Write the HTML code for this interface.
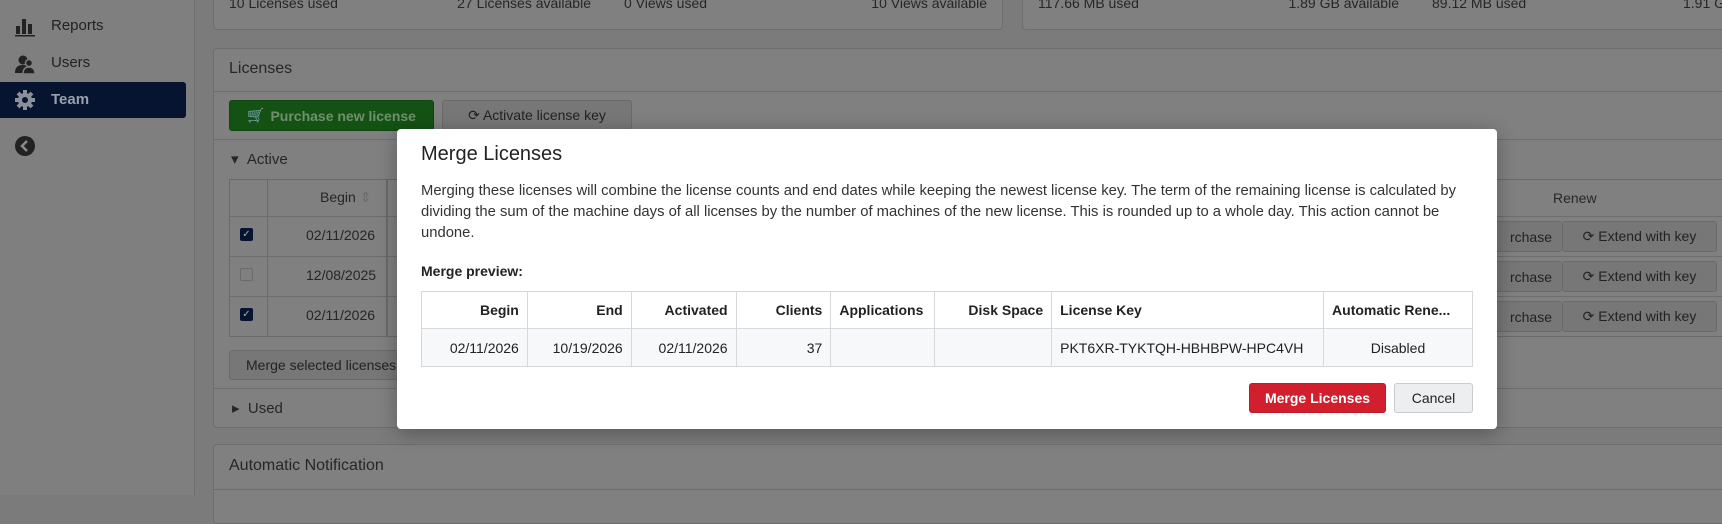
<!DOCTYPE html>
<html style="background:#7b7b7b"><head><meta charset="utf-8"><style>
*{box-sizing:border-box;margin:0;padding:0}
body{width:1722px;height:495px;overflow:hidden;background:#7b7b7b;font-family:"Liberation Sans",sans-serif;color:#262626;position:relative;font-size:14px;white-space:nowrap}
.a{position:absolute}
.side{left:0;top:0;width:195px;height:495px;background:#7f7f7f;border-right:1px solid #6f6f6f}
.nav{position:absolute;left:51px;font-size:15px;color:#222}
.card{background:#808080;border:1px solid #6e6e6e;border-radius:4px}
.line{height:1px;background:#6e6e6e}
.btn{position:absolute;border:1px solid #6a6a6a;border-radius:3px;background:#777;font-size:14px;display:flex;align-items:center;justify-content:center;gap:6px;color:#222}
.modal{left:397px;top:129px;width:1100px;height:300px;background:#fff;border-radius:4px;box-shadow:0 4px 20px rgba(0,0,0,.3)}
table{border-collapse:collapse;position:absolute;left:24px;top:162px;width:1052px;font-size:14px}
td,th{border:1px solid #d5d9dc;height:37px;padding:0 8px;text-align:right;font-weight:normal;color:#222}
th{font-weight:600}
tr.b td{background:#f7f8f9;height:38px}
</style></head><body>
<div class="a side"></div>
<svg class="a" style="left:15px;top:17px" width="21" height="20"><rect x="1" y="9" width="4" height="8" fill="#222"/><rect x="7" y="2" width="4" height="15" fill="#222"/><rect x="13" y="7" width="4" height="10" fill="#222"/><rect x="0" y="18" width="20" height="1.5" fill="#222"/></svg>
<div class="nav" style="top:17px">Reports</div>
<svg class="a" style="left:15px;top:55px" width="21" height="19"><circle cx="8" cy="5" r="4.5" fill="#222"/><path d="M0 18c0-6 3-8 8-8s8 2 8 8z" fill="#222"/><circle cx="14" cy="8" r="3.5" fill="#222" stroke="#7f7f7f" stroke-width="1.5"/><path d="M8 19c0-5 2.5-7 6-7s6 2 6 7z" fill="#222" stroke="#7f7f7f" stroke-width="1.5"/></svg>
<div class="nav" style="top:54px">Users</div>
<div class="a" style="left:0;top:82px;width:186px;height:36px;background:#061430;border-radius:0 3px 3px 0"></div>
<svg class="a" style="left:15px;top:90px" width="20" height="20"><g fill="#8a8f98"><circle cx="10" cy="10" r="7"/><g stroke="#8a8f98" stroke-width="4"><line x1="10" y1="0" x2="10" y2="20"/><line x1="0" y1="10" x2="20" y2="10"/><line x1="3" y1="3" x2="17" y2="17"/><line x1="17" y1="3" x2="3" y2="17"/></g></g><circle cx="10" cy="10" r="3" fill="#061430"/></svg>
<div class="nav" style="top:91px;color:#9aa0aa;font-weight:bold">Team</div>
<svg class="a" style="left:15px;top:136px" width="20" height="20"><circle cx="10" cy="10" r="10" fill="#222"/><path d="M12 5l-5 5 5 5" stroke="#8a8a8a" stroke-width="2.5" fill="none"/></svg>

<div class="a card" style="left:213px;top:-10px;width:790px;height:40px"></div>
<div class="a card" style="left:1022px;top:-10px;width:720px;height:40px"></div>
<div class="a" style="left:229px;top:-5px;font-size:14px">10 Licenses used</div>
<div class="a" style="left:440px;width:151px;text-align:right;top:-5px">27 Licenses available</div>
<div class="a" style="left:624px;top:-5px">0 Views used</div>
<div class="a" style="left:840px;width:147px;text-align:right;top:-5px">10 Views available</div>
<div class="a" style="left:1038px;top:-5px">117.66 MB used</div>
<div class="a" style="left:1250px;width:149px;text-align:right;top:-5px">1.89 GB available</div>
<div class="a" style="left:1432px;top:-5px">89.12 MB used</div>
<div class="a" style="left:1683px;top:-5px">1.91 GB</div>

<div class="a card" style="left:213px;top:48px;width:1530px;height:380px"></div>
<div class="a" style="left:229px;top:60px;font-size:16px">Licenses</div>
<div class="a line" style="left:214px;top:91px;width:1508px"></div>
<div class="btn" style="left:229px;top:100px;width:205px;height:31px;background:#145214;border-color:#104510;color:#6f8f6f;font-weight:bold"><span>🛒</span>Purchase new license</div>
<div class="btn" style="left:442px;top:100px;width:190px;height:31px">⟳ Activate license key</div>
<div class="a line" style="left:214px;top:139px;width:1508px"></div>
<div class="a" style="left:231px;top:150px;font-size:15px">▾&nbsp;&nbsp;Active</div>
<div class="a" style="left:229px;top:179px;width:1500px;height:158px;border:1px solid #6a6a6a"></div>
<div class="a line" style="left:229px;top:216px;width:1500px"></div>
<div class="a line" style="left:229px;top:256px;width:1500px"></div>
<div class="a line" style="left:229px;top:296px;width:1500px"></div>
<div class="a" style="left:267px;top:179px;width:1px;height:158px;background:#6a6a6a"></div>
<div class="a" style="left:386px;top:179px;width:2px;height:158px;background:#6a6a6a"></div>
<div class="a" style="left:320px;top:189px">Begin <span style="color:#6a6a6a">⇕</span></div>
<div class="a" style="left:240px;top:228px;width:13px;height:13px;background:#061430;border-radius:2px;color:#aaa;font-size:10px;text-align:center;line-height:13px">✓</div>
<div class="a" style="left:240px;top:268px;width:13px;height:13px;border:1px solid #6a6a6a;border-radius:2px"></div>
<div class="a" style="left:240px;top:308px;width:13px;height:13px;background:#061430;border-radius:2px;color:#aaa;font-size:10px;text-align:center;line-height:13px">✓</div>
<div class="a" style="left:306px;top:227px">02/11/2026</div>
<div class="a" style="left:306px;top:267px">12/08/2025</div>
<div class="a" style="left:306px;top:307px">02/11/2026</div>
<div class="a" style="left:1553px;top:190px">Renew</div>
<div class="btn" style="left:1480px;top:221px;width:82px;height:31px;justify-content:flex-end;padding-right:10px;border-right:none">rchase</div>
<div class="btn" style="left:1562px;top:221px;width:155px;height:31px">⟳ Extend with key</div>
<div class="btn" style="left:1480px;top:261px;width:82px;height:31px;justify-content:flex-end;padding-right:10px;border-right:none">rchase</div>
<div class="btn" style="left:1562px;top:261px;width:155px;height:31px">⟳ Extend with key</div>
<div class="btn" style="left:1480px;top:301px;width:82px;height:31px;justify-content:flex-end;padding-right:10px;border-right:none">rchase</div>
<div class="btn" style="left:1562px;top:301px;width:155px;height:31px">⟳ Extend with key</div>
<div class="btn" style="left:229px;top:350px;width:200px;height:30px;justify-content:flex-start;padding-left:16px">Merge selected licenses</div>
<div class="a line" style="left:214px;top:388px;width:1508px"></div>
<div class="a" style="left:232px;top:399px;font-size:15px">▸&nbsp;&nbsp;Used</div>
<div class="a card" style="left:213px;top:444px;width:1530px;height:80px"></div>
<div class="a" style="left:229px;top:457px;font-size:16px">Automatic Notification</div>
<div class="a line" style="left:214px;top:489px;width:1508px"></div>

<div class="a modal">
<div class="a" style="left:24px;top:14px;font-size:20px;color:#222">Merge Licenses</div>
<div class="a" style="left:24px;top:52px;width:1040px;font-size:14.8px;line-height:21px;color:#333;white-space:normal">Merging these licenses will combine the license counts and end dates while keeping the newest license key. The term of the remaining license is calculated by dividing the sum of the machine days of all licenses by the number of machines of the new license. This is rounded up to a whole day. This action cannot be undone.</div>
<div class="a" style="left:24px;top:134px;font-size:14px;font-weight:600;color:#222">Merge preview:</div>
<table><tr><th style="width:106px">Begin</th><th style="width:104px">End</th><th style="width:105px">Activated</th><th style="width:95px">Clients</th><th style="width:104px;text-align:left">Applications</th><th style="width:117px">Disk Space</th><th style="width:272px;text-align:left">License Key</th><th style="width:149px;text-align:left">Automatic Rene...</th></tr>
<tr class="b"><td>02/11/2026</td><td>10/19/2026</td><td>02/11/2026</td><td>37</td><td></td><td></td><td style="text-align:left">PKT6XR-TYKTQH-HBHBPW-HPC4VH</td><td style="text-align:center">Disabled</td></tr></table>
<div class="btn" style="left:852px;top:254px;width:137px;height:30px;background:#d21f2e;border-color:#c01a28;color:#fff;font-weight:600">Merge Licenses</div>
<div class="btn" style="left:997px;top:254px;width:79px;height:30px;background:#eceeef;border-color:#c8ccd0">Cancel</div>
</div>
</body></html>
